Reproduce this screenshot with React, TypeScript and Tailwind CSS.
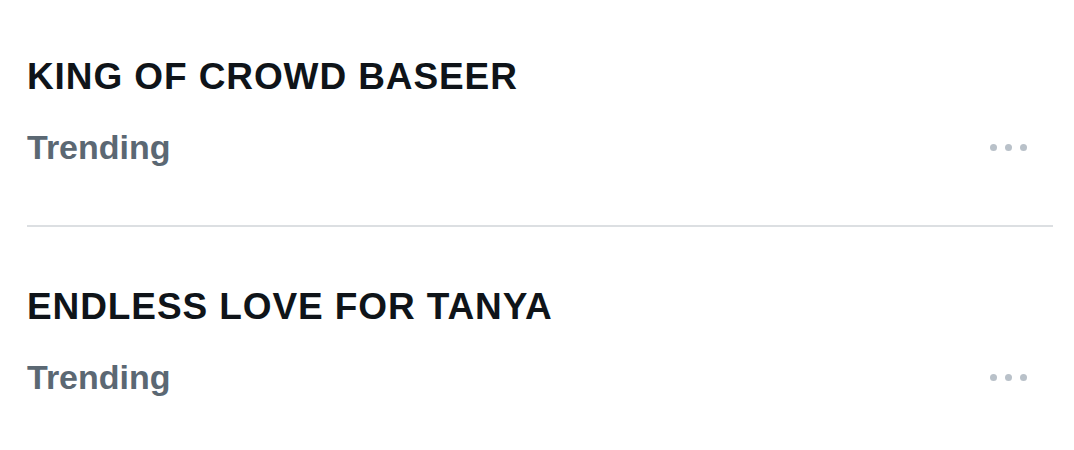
const trends = [
  { title: "KING OF CROWD BASEER", label: "Trending" },
  { title: "ENDLESS LOVE FOR TANYA", label: "Trending" },
];

function MoreDots() {
  return (
    <div className="flex items-center gap-[8px]">
      <span className="w-[7px] h-[7px] rounded-full bg-[#b9c1c9]" />
      <span className="w-[7px] h-[7px] rounded-full bg-[#b9c1c9]" />
      <span className="w-[7px] h-[7px] rounded-full bg-[#b9c1c9]" />
    </div>
  );
}

function TrendRow({ title, label }: { title: string; label: string }) {
  return (
    <div className="flex flex-col pl-[27px] pr-[47px]">
      <div className="text-[37px] leading-[40px] font-bold text-[#0f1419] tracking-[0.9px]">
        {title}
      </div>
      <div className="mt-[30px] flex items-center justify-between">
        <span className="text-[34px] leading-[40px] font-bold text-[#5b6873]">
          {label}
        </span>
        <MoreDots />
      </div>
    </div>
  );
}

export default function App() {
  return (
    <div
      className="w-[1074px] h-[450px] bg-white overflow-hidden"
      style={{ fontFamily: "'Liberation Sans', Arial, sans-serif" }}
    >
      <div className="pt-[57px]">
        <TrendRow {...trends[0]} />
      </div>
      <div className="mt-[58px] ml-[27px] mr-[21px] h-[2px] bg-[#dcdfe2]" />
      <div className="pt-[60px]">
        <TrendRow {...trends[1]} />
      </div>
    </div>
  );
}
